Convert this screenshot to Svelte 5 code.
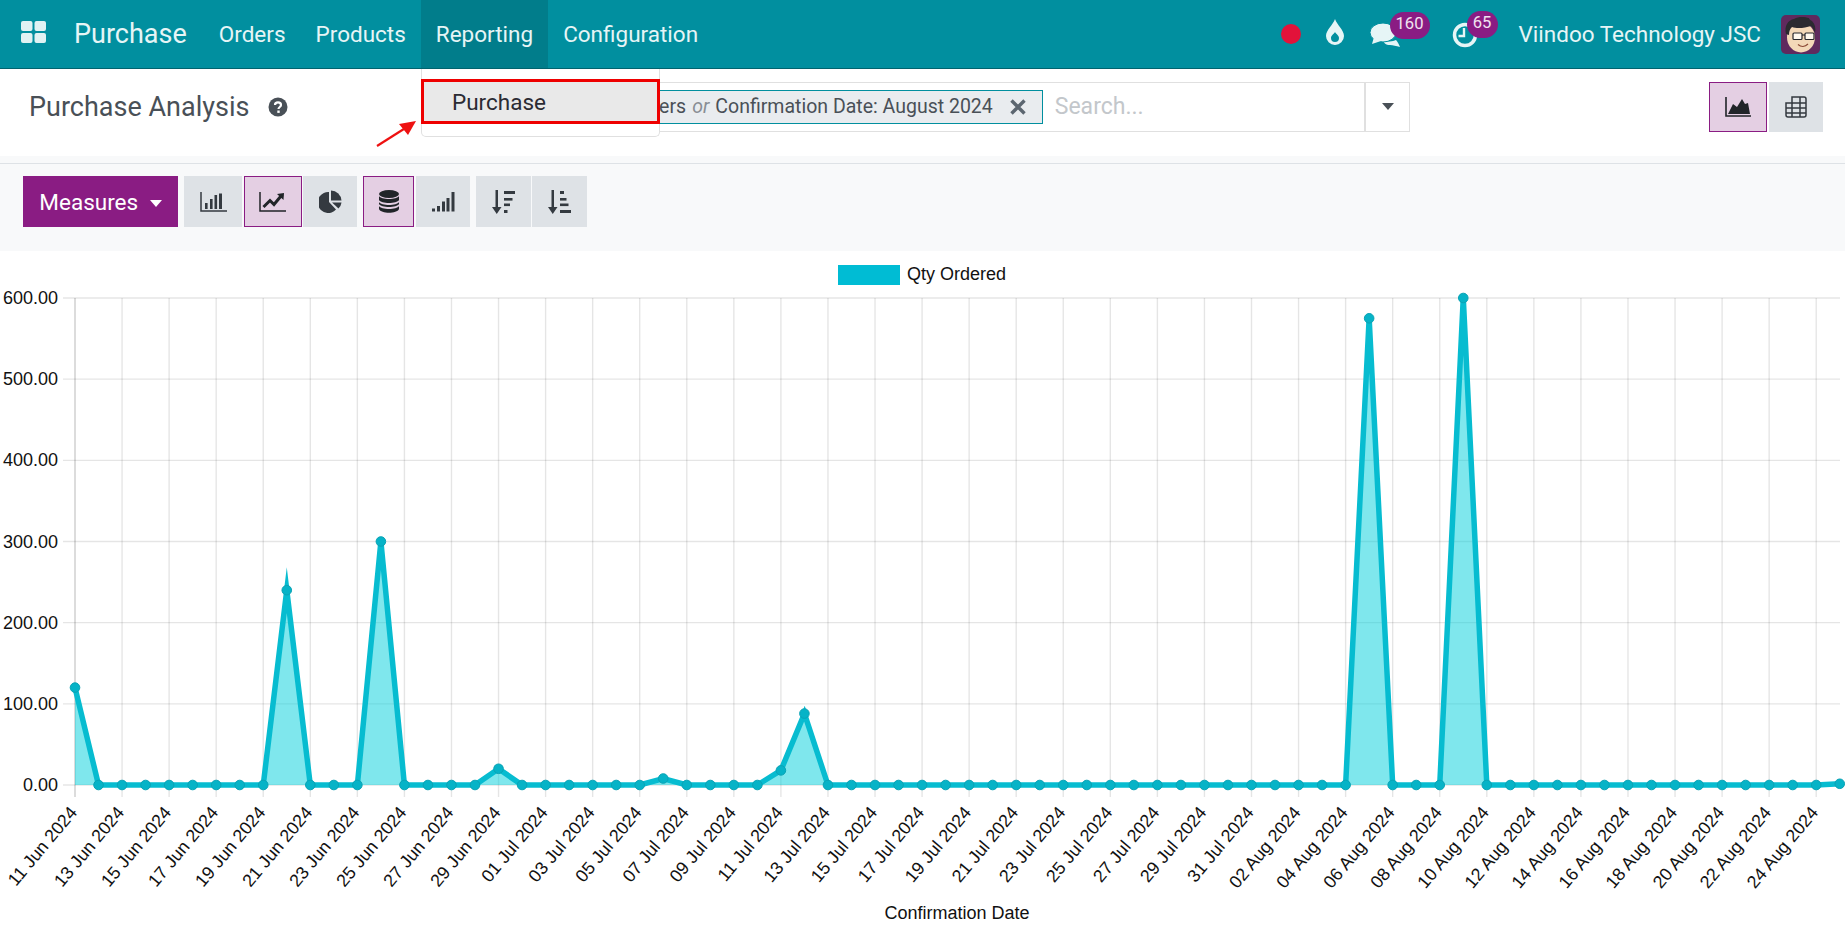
<script lang="ts">
  // chart geometry
  const left = 75;
  const step = 23.53;
  const top = 47;
  const bottom = 534;
  const xAt = (i: number) => left + i * step;
  const yAt = (v: number) => bottom - (v / 600) * (bottom - top);

  const spikes: Record<number, number> = {
    0: 120, 9: 240, 13: 300, 18: 20, 25: 8, 30: 18, 31: 88, 55: 575, 59: 600, 75: 1.5
  };
  const points = Array.from({ length: 76 }, (_, i) => ({ x: xAt(i), y: yAt(spikes[i] || 0) }));
  const linePath = points.map((p) => `${p.x},${p.y}`).join(' ');
  const areaPath = `${left},${bottom} ${linePath} ${xAt(75)},${bottom}`;

  const yTicks = [0, 100, 200, 300, 400, 500, 600];

  const months = ['Jun', 'Jul', 'Aug'];
  function dateLabel(i: number) {
    const d = new Date(Date.UTC(2024, 5, 11 + i));
    return `${String(d.getUTCDate()).padStart(2, '0')} ${months[d.getUTCMonth() - 5]} 2024`;
  }
  const xTicks = Array.from({ length: 38 }, (_, k) => ({ x: xAt(k * 2), label: dateLabel(k * 2) }));

  const menu = ['Orders', 'Products', 'Reporting', 'Configuration'];
</script>

<div class="page">
  <header class="navbar">
    <button class="apps" aria-label="Apps">
      <svg width="25" height="22" viewBox="0 0 25 22">
        <rect x="0" y="0" width="11.5" height="10" rx="2" />
        <rect x="13.5" y="0" width="11.5" height="10" rx="2" />
        <rect x="0" y="12" width="11.5" height="10" rx="2" />
        <rect x="13.5" y="12" width="11.5" height="10" rx="2" />
      </svg>
    </button>
    <span class="brand">Purchase</span>
    <nav class="menu">
      {#each menu as item}
        <span class="menu-item" class:open={item === 'Reporting'}>{item}</span>
      {/each}
    </nav>

    <div class="systray">
      <span class="rec"></span>
      <svg class="drop" width="18" height="26" viewBox="0 0 18 26">
        <path d="M9 0 C11 6 18 11 18 17 A9 9 0 0 1 0 17 C0 11 7 6 9 0 Z" fill="#e6f5f6" />
        <path d="M9 13 C10 15 13 16.500 13 19 A4 4 0 0 1 5 19 C5 16.500 8 15 9 13 Z" fill="#018f9f" />
      </svg>
      <span class="tray-item chat">
        <svg width="30" height="24" viewBox="0 0 30 24">
          <path d="M13 16 C18 20 23 18 26 17 C28 19 29 22 30 24 C26 23 23 22 20 22 C16 22 13 20 13 16 Z" fill="#e6f5f6" />
          <ellipse cx="13" cy="9.500" rx="13" ry="9.500" fill="#e6f5f6" stroke="#018f9f" stroke-width="1" />
          <path d="M4 14 L2 21 L11 18 Z" fill="#e6f5f6" />
        </svg>
        <span class="badge wide">160</span>
      </span>
      <span class="tray-item clock">
        <svg width="26" height="26" viewBox="0 0 26 26">
          <circle cx="13" cy="13" r="10.500" fill="none" stroke="#e6f5f6" stroke-width="3.500" />
          <path d="M12 6 V14 H6.500" fill="none" stroke="#e6f5f6" stroke-width="2.400" />
        </svg>
        <span class="badge">65</span>
      </span>
      <span class="company">Viindoo Technology JSC</span>
      <svg class="avatar" width="39" height="39" viewBox="0 0 39 39">
        <rect width="39" height="39" rx="5" fill="#5f2a5e" />
        <ellipse cx="20" cy="22.500" rx="14" ry="15" fill="#f3d8b8" />
        <path d="M5 19 C3 11 7 5 13 4 C18 1 24 2 28 3 C28 4 29 5 31 6 C34 9 35 13 34 18 C33 15 32 13 30 11 C24 13 16 14 11 12 C9 14 8 16 8 20 Z" fill="#2b2a30" />
        <rect x="12" y="18" width="9" height="6.500" rx="1" fill="#fff8ee" stroke="#26262c" stroke-width="1.200" />
        <rect x="24" y="18" width="9" height="6.500" rx="1" fill="#fff8ee" stroke="#26262c" stroke-width="1.200" />
        <path d="M21 20 H24" stroke="#26262c" stroke-width="1.100" />
        <path d="M17 29.500 C20 32 24 32 27 29" fill="none" stroke="#8c4a36" stroke-width="1.200" />
      </svg>
    </div>
  </header>

  <section class="control-panel">
    <div class="title">
      <span>Purchase Analysis</span>
      <svg width="20" height="20" viewBox="0 0 20 20" class="help">
        <circle cx="10" cy="10" r="9.500" fill="#495057" />
        <path d="M7 8 C7 4.500 13 4.500 13 8 C13 10 10.500 10 10.500 12" fill="none" stroke="#fff" stroke-width="2.200" />
        <rect x="9.300" y="13.500" width="2.400" height="2.400" fill="#fff" />
      </svg>
    </div>

    <div class="searchbox">
      <div class="search-input">
        <span class="facet">
          <span>Purchase Orders</span>
          <em>or</em>
          <span>Confirmation Date: August 2024</span>
          <svg width="16" height="16" viewBox="0 0 16 16" class="facet-x">
            <path d="M1.500 1.500 L14.500 14.500 M14.500 1.500 L1.500 14.500" stroke="#5c6670" stroke-width="3.400" />
          </svg>
        </span>
        <span class="placeholder">Search...</span>
      </div>
      <div class="search-toggle"><span class="caret dark"></span></div>
    </div>

    <div class="views">
      <button class="tool active view" aria-label="Graph">
        <svg width="26" height="20" viewBox="0 0 26 20">
          <path d="M1 0 V19 H26" fill="none" stroke="#212529" stroke-width="1.600" />
          <path d="M3 17 L8 7 L12 10 L17 2 L20 7 L23 6 L25 17 Z" fill="#212529" />
        </svg>
      </button>
      <button class="tool view" aria-label="Pivot">
        <svg width="22" height="22" viewBox="0 0 22 22" fill="none" stroke="#343a40" stroke-width="1.500">
          <path d="M7 1 H19 Q21 1 21 3 V19 Q21 21 19 21 H3 Q1 21 1 19 V7 H7 Z" />
          <path d="M1 12 H21 M1 17 H21 M7 7 H21 M7 7 V21 M15 1 V21" />
        </svg>
      </button>
    </div>

    <!-- open Reporting dropdown -->
    <div class="dropdown">
      <div class="dropdown-item">Purchase</div>
    </div>
    <svg class="arrow" width="44" height="30" viewBox="0 0 44 30">
      <path d="M2 27 L32 8" stroke="#ee1111" stroke-width="2.200" />
      <path d="M41 2 L24 5 L33 16 Z" fill="#ee1111" />
    </svg>
  </section>

  <section class="toolbar">
    <button class="measures">Measures <span class="caret"></span></button>
    <div class="group first">
      <button class="tool b1" aria-label="Bar chart">
        <svg width="27" height="20" viewBox="0 0 27 20">
          <path d="M1 0 V19 H27" fill="none" stroke="#343a40" stroke-width="1.500" />
          <path d="M5 11 h2.600 v6 h-2.600 Z M10 7 h2.600 v10 h-2.600 Z M14.500 3 h2.600 v14 h-2.600 Z M19 1.500 h3 v15.500 h-3 Z" fill="#343a40" />
        </svg>
      </button>
      <button class="tool active b2" aria-label="Line chart">
        <svg width="27" height="20" viewBox="0 0 27 20">
          <path d="M1 0 V19 H27" fill="none" stroke="#212529" stroke-width="1.500" />
          <path d="M4.500 15 L11 8.500 L15 12.500 L22 4" fill="none" stroke="#212529" stroke-width="3" />
          <path d="M18 2 L25 1 L24.500 8 Z" fill="#212529" />
        </svg>
      </button>
      <button class="tool b3" aria-label="Pie chart">
        <svg width="23" height="23" viewBox="0 0 23 23">
          <path d="M10 2 V12 L17 19.500 A10.500 10.500 0 1 1 10 2 Z" fill="#343a40" />
          <path d="M12 0.500 A10.500 10.500 0 0 1 22.500 10.500 H12 Z" fill="#343a40" />
          <path d="M13 12.500 H22.500 A10.500 10.500 0 0 1 19.500 18.500 Z" fill="#343a40" />
        </svg>
      </button>
    </div>
    <div class="group">
      <button class="tool active b4" aria-label="Stacked">
        <svg width="20" height="23" viewBox="0 0 20 23" fill="#212529">
          <ellipse cx="10" cy="4" rx="10" ry="4" />
          <path d="M0 6 C2 10 18 10 20 6 V10 C18 14 2 14 0 10 Z" />
          <path d="M0 12 C2 16 18 16 20 12 V14 C18 18 2 18 0 14 Z" />
          <path d="M0 16 C2 20 18 20 20 16 V19 C18 24 2 24 0 19 Z" />
        </svg>
      </button>
      <button class="tool b5" aria-label="Cumulative">
        <svg width="23" height="20" viewBox="0 0 23 20" fill="#343a40">
          <rect x="0" y="16.500" width="3" height="3" />
          <rect x="5" y="14" width="3" height="5.500" />
          <rect x="10" y="9.500" width="3" height="10" />
          <rect x="14.500" y="6" width="3" height="13.500" />
          <rect x="19.500" y="0" width="3" height="19.500" />
        </svg>
      </button>
    </div>
    <div class="group tight">
      <button class="tool b6" aria-label="Descending">
        <svg width="24" height="24" viewBox="0 0 24 24" fill="#343a40">
          <path d="M3.500 0 H6 V17 H9.500 L4.750 24 L0 17 H3.500 Z" />
          <rect x="12" y="1" width="11" height="3" />
          <rect x="12" y="8" width="8.500" height="2.600" />
          <rect x="12" y="13.500" width="6" height="2.600" />
          <rect x="12" y="20" width="3.500" height="3" />
        </svg>
      </button>
      <button class="tool b7" aria-label="Ascending">
        <svg width="24" height="24" viewBox="0 0 24 24" fill="#343a40">
          <path d="M3.500 0 H6 V17 H9.500 L4.750 24 L0 17 H3.500 Z" />
          <rect x="12" y="1" width="4" height="3" />
          <rect x="12" y="8" width="6.500" height="2.600" />
          <rect x="12" y="13.500" width="8.500" height="2.600" />
          <rect x="12" y="20" width="11" height="3" />
        </svg>
      </button>
    </div>
  </section>

  <svg class="chart" width="1845" height="680" viewBox="0 0 1845 680">
    <!-- grid -->
    {#each yTicks as v}
      <line x1="63" x2="1840" y1={yAt(v)} y2={yAt(v)} class="grid" />
      <text x="58" y={yAt(v) + 6} text-anchor="end" class="tick">{v.toFixed(2)}</text>
    {/each}
    {#each xTicks as t, i}
      <line x1={t.x} x2={t.x} y1={top} y2="546" class="grid" class:axis={i === 0} />
      <text
        x={t.x + 3}
        y="562"
        text-anchor="end"
        transform="rotate(-50 {t.x + 3} 562)"
        class="tick date"
      >{t.label}</text>
    {/each}

    <!-- legend -->
    <rect x="838" y="14" width="62" height="20" fill="#00bcd4" />
    <text x="907" y="28.500" class="tick">Qty Ordered</text>

    <!-- series -->
    <polygon points={areaPath} fill="#00cfdc" fill-opacity="0.5" />
    <polyline points={linePath} fill="none" stroke="#07bcd0" stroke-width="5.500" stroke-miterlimit="10" />
    {#each points as p}
      <circle cx={p.x} cy={p.y} r="4.800" fill="#06b3c7" stroke="#0aa3b5" stroke-width="1" />
    {/each}

    <text x="957" y="668" text-anchor="middle" class="tick">Confirmation Date</text>
  </svg>
</div>

<style>
  :global(body) {
    margin: 0;
    background: #fff;
    overflow: hidden;
  }

  .page {
    width: 1845px;
    height: 931px;
    font-family: Roboto, "Noto Sans", sans-serif;
    font-size: 22.500px;
    color: #495057;
  }

  button {
    border: none;
    padding: 0;
    font: inherit;
    cursor: pointer;
  }

  .navbar {
    display: flex;
    align-items: center;
    height: 68px;
    border-bottom: 1px solid #01636e;
    background: #018f9f;
    color: #e6f5f6;
  }

  .apps {
    display: flex;
    margin-left: 21px;
    margin-top: -5px;
    background: none;
  }

  .apps rect {
    fill: #e0f2f3;
  }

  .brand {
    margin-left: 28px;
    font-size: 27px;
  }

  .menu {
    display: flex;
    align-self: stretch;
    margin-left: 17px;
  }

  .menu-item {
    display: flex;
    align-items: center;
    padding: 0 15px;
  }

  .menu-item.open {
    background: #017d8b;
  }

  .systray {
    display: flex;
    align-items: center;
    margin-left: auto;
    padding-right: 25px;
  }

  .rec {
    width: 20px;
    height: 20px;
    border-radius: 50%;
    background: #e2123a;
  }

  .drop {
    margin-left: 25px;
    margin-top: -4px;
  }

  .tray-item {
    position: relative;
    display: flex;
  }

  .chat {
    margin-left: 26px;
    margin-top: 2px;
  }

  .clock {
    margin-left: 52px;
    margin-top: 2px;
  }

  .badge {
    position: absolute;
    top: -11px;
    left: 15px;
    min-width: 31px;
    height: 27px;
    border-radius: 14px;
    background: #8a1c83;
    color: #f0e3ef;
    font-size: 16.600px;
    line-height: 24px;
    text-align: center;
  }

  .badge.wide {
    left: 20px;
    width: 40px;
  }

  .company {
    margin-left: 41px;
  }

  .avatar {
    margin-left: 20px;
  }

  .control-panel {
    position: relative;
    display: flex;
    height: 94px;
    padding-top: 12.500px;
    box-sizing: border-box;
    border-bottom: 7px solid #f8f9fa;
    background: #fff;
  }

  .title {
    display: flex;
    align-items: center;
    width: 500px;
    height: 50px;
    padding-left: 29px;
    font-size: 27px;
  }

  .help {
    margin-left: 19px;
  }

  .searchbox {
    display: flex;
    width: 881px;
    height: 50px;
    box-sizing: border-box;
    border: 1px solid #e0e0e0;
  }

  .search-input {
    display: flex;
    flex: 1;
    align-items: center;
    overflow: hidden;
  }

  .facet {
    display: flex;
    flex: none;
    align-items: center;
    gap: 6px;
    height: 34px;
    margin-left: 3px;
    padding: 0 16px 0 8px;
    box-sizing: border-box;
    border: 1px solid #018f9f;
    background: #e9ecef;
    font-size: 19.500px;
  }

  .facet em {
    color: #888e94;
  }

  .facet-x {
    margin-left: 11px;
  }

  .placeholder {
    margin-left: 12px;
    font-size: 23px;
    color: #c3c7cb;
  }

  .search-toggle {
    display: flex;
    align-items: center;
    justify-content: center;
    width: 43px;
    border-left: 2px solid #e0e0e0;
  }

  .caret {
    display: inline-block;
    border-top: 7px solid #fff;
    border-right: 6.500px solid transparent;
    border-left: 6.500px solid transparent;
    vertical-align: middle;
  }

  .caret.dark {
    border-top-color: #495057;
  }

  .views {
    display: flex;
    gap: 2px;
    height: 50px;
    margin-left: 299px;
  }

  .tool {
    display: flex;
    align-items: center;
    justify-content: center;
    box-sizing: border-box;
    background: #dee2e6;
  }

  .tool.active {
    border: 1px solid #8a1c83;
    background: #e4cfe3;
  }

  .view {
    width: 58px;
  }

  .view + .view {
    width: 54px;
  }

  .dropdown {
    position: absolute;
    top: 0;
    left: 421px;
    width: 239px;
    height: 68px;
    box-sizing: border-box;
    padding-top: 10px;
    border: 1px solid #e0e0e0;
    border-top: none;
    border-radius: 0 0 5px 5px;
    background: #fff;
  }

  .dropdown-item {
    height: 45px;
    margin: 0 -1px;
    padding-left: 28px;
    box-sizing: border-box;
    border: 3px solid #ee0000;
    background: #e9e9e9;
    color: #2b2b33;
    line-height: 41px;
  }

  .arrow {
    position: absolute;
    top: 50px;
    left: 375px;
  }

  .toolbar {
    display: flex;
    gap: 6px;
    height: 88px;
    padding: 12px 0 0 23px;
    box-sizing: border-box;
    border-top: 1px solid #dee2e6;
    background: #f8f9fa;
  }

  .measures {
    width: 155px;
    height: 51px;
    background: #8a1c83;
    color: #fff;
  }

  .measures .caret {
    margin-left: 6px;
  }

  .group {
    display: flex;
    gap: 2px;
    height: 51px;
  }

  .group.first {
    gap: 1.500px;
  }

  .group.tight {
    gap: 1px;
  }

  .b1 { width: 58px; }
  .b2 { width: 58px; }
  .b3 { width: 54px; }
  .b4 { width: 51px; }
  .b5 { width: 54px; }
  .b6, .b7 { width: 55px; }

  .chart {
    display: block;
    background: #fff;
  }

  .grid {
    stroke: #000;
    stroke-opacity: 0.1;
    stroke-width: 1.400;
  }

  .grid.axis {
    stroke-opacity: 0.2;
  }

  .tick {
    font-family: "Liberation Sans", Arial, sans-serif;
    font-size: 18px;
    fill: #111;
  }

  .tick.date {
    font-size: 17.800px;
  }
</style>
